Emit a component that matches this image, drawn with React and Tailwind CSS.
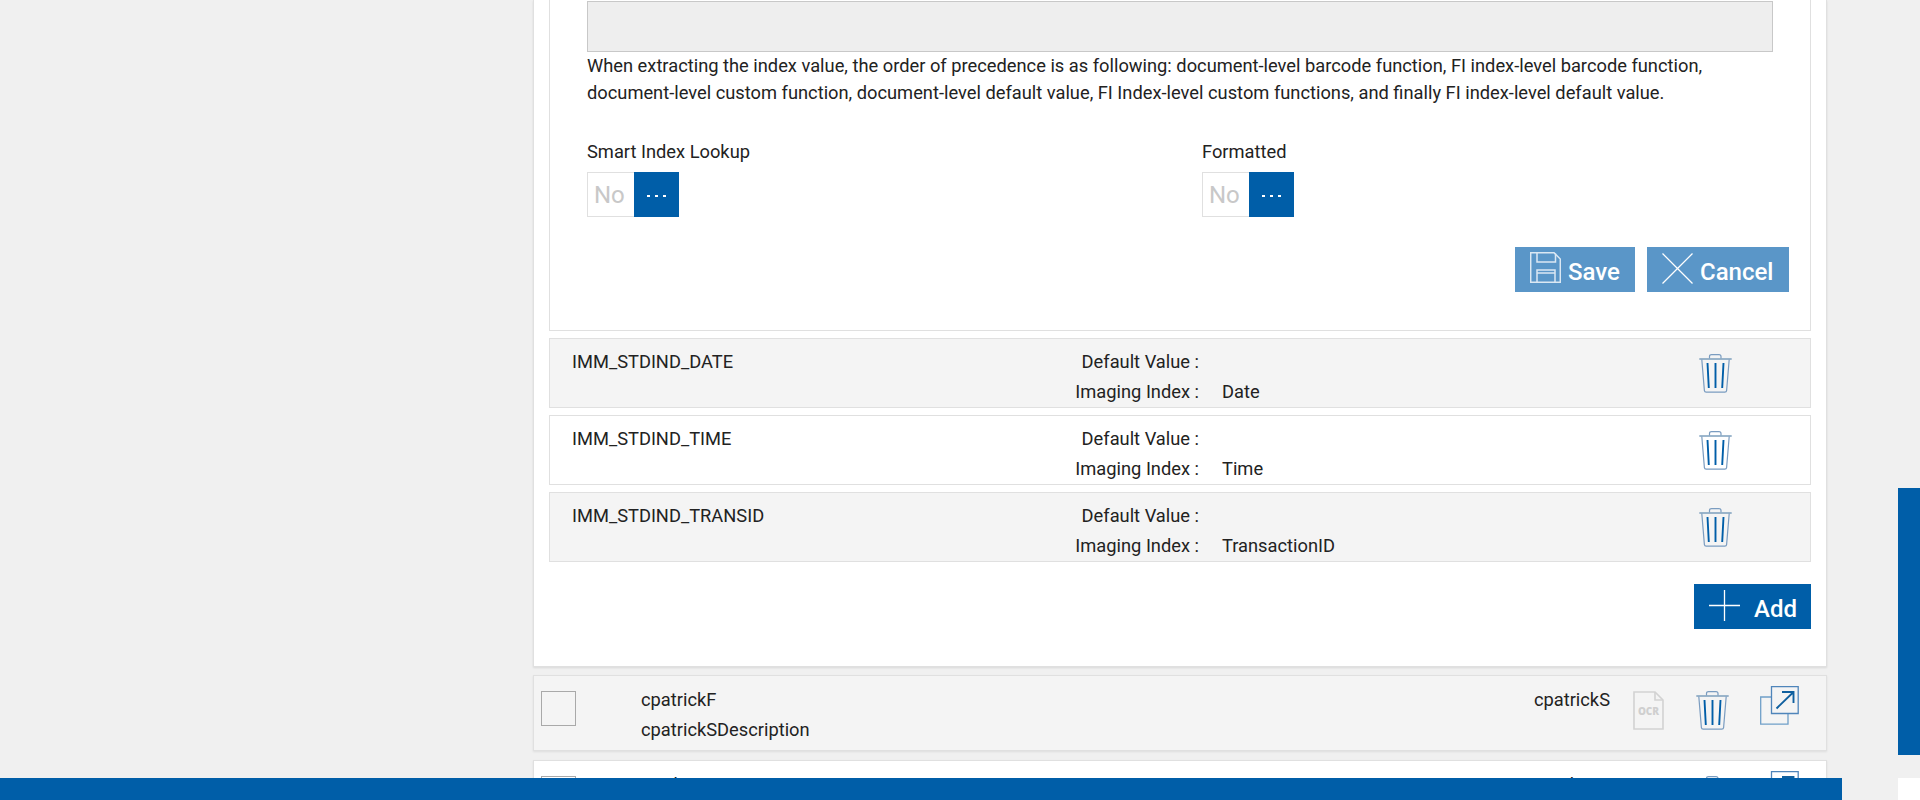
import React from "react";

function TrashIcon({ className }) {
  return (
    <svg viewBox="0 0 33 39" className={className} fill="none">
      <path d="M10.5 4.5V2.5C10.5 1.2 11.3 .6 12.5 .6H20C21.2 .6 22 1.2 22 2.5V4.5" stroke="#7a9cc0" strokeWidth="1.2" />
      <path d="M.3 5H32.7" stroke="#7d9fbd" strokeWidth="1.4" />
      <path d="M2.8 5.5L5.4 36.6C5.5 37.6 6.2 38.2 7.2 38.2H25.8C26.8 38.2 27.5 37.6 27.6 36.6L30.2 5.5" stroke="#7a9cc0" strokeWidth="1.2" />
      <path d="M8.5 9L9.8 34M16.5 9V34M24.5 9L23.2 34" stroke="#005ea8" strokeWidth="1.9" />
    </svg>
  );
}

function OcrIcon() {
  return (
    <svg viewBox="0 0 31 39" className="h-[39px] w-[31px]" fill="none">
      <path d="M1 1H22L30 9V38H1Z" stroke="#d2d2d2" strokeWidth="1.6" />
      <path d="M22 1V9H30" stroke="#d2d2d2" strokeWidth="1.6" />
      <text x="15.5" y="24" textAnchor="middle" fontFamily="'Open Sans', sans-serif" fontSize="10" fontWeight="800" fill="#cfcfcf">OCR</text>
    </svg>
  );
}

function ExternalIcon({ className }) {
  return (
    <svg viewBox="0 0 39 39" className={className} fill="none">
      <path d="M11.5 11H.7V38.2H28V27.5" stroke="#6f9fc8" strokeWidth="1.3" />
      <path d="M11.5 .7H38.2V27.5H11.5Z" stroke="#4f85ba" strokeWidth="1.3" />
      <path d="M16.5 22.5L33 6.5M22 6H33.5V17" stroke="#10609f" strokeWidth="1.9" />
    </svg>
  );
}

function Toggle() {
  return (
    <div className="flex h-[45px] w-[92px]">
      <div className="w-[47px] border border-r-0 border-[#e0e0e0] pl-[6px] text-[24px] leading-[45px] text-[#c8c8c8]">No</div>
      <div className="flex w-[45px] justify-center gap-[5px] bg-[#005ea8] pt-[23px]">
        <span className="h-[2px] w-[3px] bg-white"></span>
        <span className="h-[2px] w-[3px] bg-white"></span>
        <span className="h-[2px] w-[3px] bg-white"></span>
      </div>
    </div>
  );
}

function IndexRow({ name, value, shaded }) {
  return (
    <div className={`flex h-[70px] items-start border border-[#e0e0e0] pl-[22px] ${shaded ? "bg-[#f4f4f4]" : "bg-white"}`}>
      <div className="w-[300px] pt-[8px]">{name}</div>
      <div className="w-[327px] pt-[8px] text-right">
        <div>Default Value :</div>
        <div>Imaging Index :</div>
      </div>
      <div className="ml-[23px] pt-[38px]">{value}</div>
      <TrashIcon className="ml-auto mr-[78px] mt-[15px] h-[39px] w-[33px]" />
    </div>
  );
}

function ItemRow({ first, second, desc, shaded, ocr }) {
  return (
    <div className={`flex h-[76px] shrink-0 items-start border border-[#e0e0e0] shadow-[0_1px_2px_rgba(0,0,0,0.08)] ${shaded ? "bg-[#f4f4f4]" : "bg-white"}`}>
      <div className="ml-[7px] mt-[15px] h-[35px] w-[35px] border border-[#a9a9a9]"></div>
      <div className="ml-[65px] w-[892px] pt-[9px]">
        <div>{first}</div>
        <div>{desc}</div>
      </div>
      <div className="w-[77px] pt-[9px] text-right">{second}</div>
      <div className="ml-[23px] mt-[15px] w-[31px]">{ocr ? <OcrIcon /> : null}</div>
      <TrashIcon className="ml-[32px] mt-[15px] h-[39px] w-[33px]" />
      <ExternalIcon className="ml-[31px] mt-[10px] h-[39px] w-[39px]" />
    </div>
  );
}

export default function App() {
  return (
    <div className="relative h-[800px] w-[1920px] overflow-hidden bg-[#f0f0f0] font-['Roboto',sans-serif] text-[18.3px] leading-[30px] text-[#222]">
      <div className="ml-[533px] w-[1294px]">
        <div className="h-[667px] border border-t-0 border-[#e0e0e0] bg-white px-[15px] shadow-[0_1px_2px_rgba(0,0,0,0.1)]">
          <div className="h-[331px] border border-t-0 border-[#e0e0e0] pl-[37px] pr-[21px] pt-px">
            <div className="h-[51px] w-[1186px] border border-[#c8c8c8] bg-[#eeeeee]"></div>
            <p className="w-[1186px] leading-[27px]">
              When extracting the index value, the order of precedence is as following: document-level barcode function, FI index-level barcode function, document-level custom function, document-level default value, FI Index-level custom functions, and finally FI index-level default value.
            </p>
            <div className="mt-[32px] flex">
              <div className="w-[615px]">
                <div className="leading-[27px]">Smart Index Lookup</div>
                <div className="mt-[7px]"><Toggle /></div>
              </div>
              <div>
                <div className="leading-[27px]">Formatted</div>
                <div className="mt-[7px]"><Toggle /></div>
              </div>
            </div>
            <div className="mt-[30px] flex justify-end gap-[12px]">
              <button type="button" className="flex h-[45px] w-[120px] items-start bg-[#5a96c8] pl-[15px] text-[24px] font-medium text-white">
                <svg viewBox="0 0 31 31" className="mt-[5px] h-[31px] w-[31px]" fill="none" stroke="#dbe8f3" strokeWidth="1.5">
                  <path d="M.7 .7H24L30.3 7V30.3H.7Z" />
                  <path d="M7 .7V10H25.5V1.5M7 30.3V18H25V30.3M7 21H25" />
                </svg>
                <span className="ml-[7px] mt-[10px]">Save</span>
              </button>
              <button type="button" className="flex h-[45px] w-[142px] items-start bg-[#5a96c8] pl-[15px] text-[24px] font-medium text-white">
                <svg viewBox="0 0 31 31" className="mt-[6px] h-[31px] w-[31px]" fill="none" stroke="#ffffff" strokeWidth="1.3">
                  <path d="M.5 .5L30.5 30.5M30.5 .5L.5 30.5" />
                </svg>
                <span className="ml-[7px] mt-[10px]">Cancel</span>
              </button>
            </div>
          </div>
          <div className="mt-[7px] flex flex-col gap-[7px]">
            <IndexRow name="IMM_STDIND_DATE" value="Date" shaded />
            <IndexRow name="IMM_STDIND_TIME" value="Time" />
            <IndexRow name="IMM_STDIND_TRANSID" value="TransactionID" shaded />
          </div>
          <div className="mt-[22px] flex justify-end">
            <button type="button" className="flex h-[45px] w-[117px] items-start bg-[#005ea8] pl-[15px] text-[24px] font-medium text-white">
              <svg viewBox="0 0 31 31" className="mt-[6px] h-[31px] w-[31px]" fill="none" stroke="#ffffff" strokeWidth="1.3">
                <path d="M15.5 0V31M0 15.5H31" />
              </svg>
              <span className="ml-[14px] mt-[10px]">Add</span>
            </button>
          </div>
        </div>
        <div className="mt-[8px] flex flex-col gap-[9px]">
          <ItemRow first="cpatrickF" second="cpatrickS" desc="cpatrickSDescription" shaded ocr />
          <ItemRow first="ConkanF" second="ConkanS" desc="ConkanSDescription" />
        </div>
      </div>
      {/* these sit on top of the scrolled content */}
      <div className="absolute bottom-0 left-0 h-[22px] w-[1842px] bg-[#005ea8]"></div>
      <div className="absolute right-0 top-[488px] h-[267px] w-[22px] bg-[#005ea8]"></div>
      <div className="absolute bottom-0 right-0 h-[22px] w-[22px] bg-white"></div>
    </div>
  );
}
